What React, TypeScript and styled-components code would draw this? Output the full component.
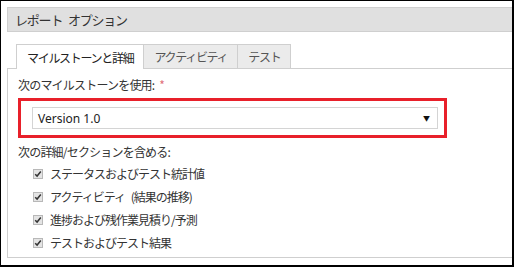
import React from "react";
import styled, { createGlobalStyle } from "styled-components";

const Global = createGlobalStyle`
  html, body { margin: 0; padding: 0; background: #fff; }
  * { box-sizing: border-box; }
  body { font-family: "Noto Sans CJK JP", "Noto Sans", sans-serif; color: #333; }
`;

const Frame = styled.div`
  width: 514px;
  height: 267px;
  border-style: solid;
  border-color: #000;
  border-width: 1px 2px 2px 1px;
  padding: 6px 0 0 6px;
  overflow: hidden;
  display: flex;
  flex-direction: column;
  background: #fff;
`;

const Header = styled.div`
  height: 25px;
  background: #e0e0e0;
  border: 1px solid #cfcfcf;
  border-right: none;
  display: flex;
  align-items: center;
  padding-left: 7px;
  font-size: 13px;
  letter-spacing: -1.2px;
  word-spacing: 4px;
  color: #333;
`;

const TabRow = styled.div`
  display: flex;
  margin-top: 12px;
  padding-left: 9px;
  height: 25px;
  border-bottom: 1px solid #cfcfcf;
`;

const Tab = styled.div<{ $active?: boolean }>`
  padding: 0 10px 0 10px;
  display: flex;
  align-items: center;
  font-size: 12px;
  letter-spacing: -1.3px;
  border: 1px solid #cfcfcf;
  border-left: ${(p) => (p.$active ? "1px solid #cfcfcf" : "none")};
  border-bottom: none;
  background: ${(p) => (p.$active ? "#fff" : "#ebebeb")};
  color: ${(p) => (p.$active ? "#222" : "#555")};
  margin-bottom: ${(p) => (p.$active ? "-1px" : "0")};
  height: ${(p) => (p.$active ? "25px" : "24px")};
  z-index: ${(p) => (p.$active ? 1 : 0)};
`;

const Panel = styled.div`
  height: 189px;
  border-left: 1px solid #cfcfcf;
  border-bottom: 1px solid #cfcfcf;
  padding: 8px 0 0 10px;
  display: flex;
  flex-direction: column;
`;

const Label = styled.div`
  font-size: 12px;
  letter-spacing: -0.8px;
  word-spacing: 3px;
  line-height: 16px;
  color: #333;
`;

const Required = styled.span`
  color: #e0707a;
`;

const Highlight = styled.div`
  margin-top: 5px;
  width: 429px;
  height: 40px;
  border: 3px solid #e8202a;
  padding: 6px 6px 0 11px;
`;

const Select = styled.div`
  height: 22px;
  border: 1px solid #d4d4d4;
  display: flex;
  align-items: center;
  justify-content: space-between;
  padding: 0 7px 0 5px;
  font-size: 12px;
  color: #222;
  font-family: "Noto Sans", "Noto Sans CJK JP", sans-serif;
`;

const Arrow = styled.span`
  font-size: 7px;
  color: #111;
`;

const SecondLabel = styled(Label)`
  margin-top: 6px;
`;

const List = styled.div`
  display: flex;
  flex-direction: column;
  gap: 7px;
  margin-top: 6px;
  padding-left: 15px;
`;

const Row = styled.div`
  display: flex;
  align-items: center;
  gap: 7px;
  font-size: 12px;
  letter-spacing: -1px;
  word-spacing: 4px;
  line-height: 16px;
  color: #333;
`;

const Box = styled.span`
  width: 10px;
  height: 10px;
  border: 1px solid #b8b8b8;
  background: #e4e4e4;
  display: inline-flex;
  align-items: center;
  justify-content: center;
`;

const Check = () => (
  <svg width="8" height="8" viewBox="0 0 8 8">
    <path d="M1.2 4.2 L3.1 6.1 L6.8 1.6" fill="none" stroke="#333" strokeWidth="1.5" />
  </svg>
);

const items = [
  "ステータスおよびテスト統計値",
  "アクティビティ (結果の推移)",
  "進捗および残作業見積り/予測",
  "テストおよびテスト結果",
];

export default function App() {
  return (
    <>
      <Global />
      <Frame>
        <Header>レポート オプション</Header>
        <TabRow>
          <Tab $active>マイルストーンと詳細</Tab>
          <Tab>アクティビティ</Tab>
          <Tab>テスト</Tab>
        </TabRow>
        <Panel>
          <Label>
            次のマイルストーンを使用: <Required>*</Required>
          </Label>
          <Highlight>
            <Select>
              <span>Version 1.0</span>
              <Arrow>▼</Arrow>
            </Select>
          </Highlight>
          <SecondLabel>次の詳細/セクションを含める:</SecondLabel>
          <List>
            {items.map((t) => (
              <Row key={t}>
                <Box>
                  <Check />
                </Box>
                <span>{t}</span>
              </Row>
            ))}
          </List>
        </Panel>
      </Frame>
    </>
  );
}
